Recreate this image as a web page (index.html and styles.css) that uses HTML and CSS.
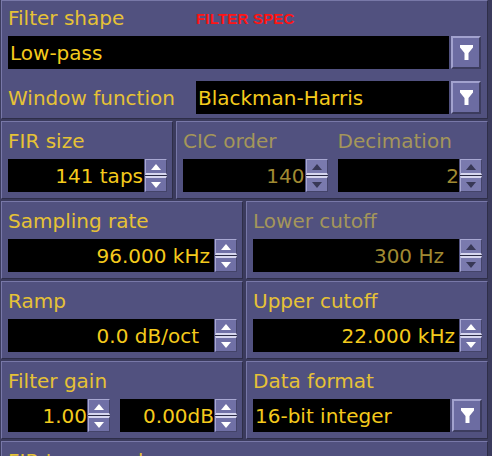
FILE: index.html
```html
<!DOCTYPE html>
<html>
<head>
<meta charset="utf-8">
<title>Filter spec</title>
<link rel="stylesheet" href="styles.css">
</head>
<body>
<div class="app">
  <section class="panel panel-top">
    <div class="title-row">
      <span class="label title-label">Filter shape</span>
      <span class="spec">FILTER SPEC</span>
    </div>
    <div class="combo">
      <div class="field field-left">Low-pass</div>
      <div class="combo-btn"><svg width="13" height="15" viewBox="0 0 13 15"><path d="M0 0H13V2.5L8.5 8V15H4.5V8L0 2.5Z" fill="#fff"/></svg></div>
    </div>
    <div class="win-row">
      <span class="label win-label">Window function</span>
      <div class="combo combo-inline">
        <div class="field field-left">Blackman-Harris</div>
        <div class="combo-btn"><svg width="13" height="15" viewBox="0 0 13 15"><path d="M0 0H13V2.5L8.5 8V15H4.5V8L0 2.5Z" fill="#fff"/></svg></div>
      </div>
    </div>
  </section>

  <div class="row row-b">
    <section class="panel cell">
      <div class="label">FIR size</div>
      <div class="spinfield">
        <div class="field field-right v-pad1">141 taps</div>
        <div class="spin"><div class="spin-up"></div><div class="spin-down"></div></div>
      </div>
    </section>
    <section class="panel cell cic">
      <div class="sub">
        <div class="label disabled">CIC order</div>
        <div class="spinfield">
          <div class="field field-right v-pad0 disabled-val">140</div>
          <div class="spin spin-off"><div class="spin-up"></div><div class="spin-down"></div></div>
        </div>
      </div>
      <div class="sub">
        <div class="label disabled">Decimation</div>
        <div class="spinfield">
          <div class="field field-right v-pad0 disabled-val">2</div>
          <div class="spin spin-off"><div class="spin-up"></div><div class="spin-down"></div></div>
        </div>
      </div>
    </section>
  </div>

  <div class="row row-half">
    <section class="panel cell">
      <div class="label">Sampling rate</div>
      <div class="spinfield">
        <div class="field field-right v-pad4">96.000 kHz</div>
        <div class="spin"><div class="spin-up"></div><div class="spin-down"></div></div>
      </div>
    </section>
    <section class="panel cell">
      <div class="label disabled">Lower cutoff</div>
      <div class="spinfield">
        <div class="field field-right v-pad15 disabled-val">300 Hz</div>
        <div class="spin spin-off"><div class="spin-up"></div><div class="spin-down"></div></div>
      </div>
    </section>
  </div>

  <div class="row row-half">
    <section class="panel cell">
      <div class="label">Ramp</div>
      <div class="spinfield">
        <div class="field field-right v-pad15">0.0 dB/oct</div>
        <div class="spin"><div class="spin-up"></div><div class="spin-down"></div></div>
      </div>
    </section>
    <section class="panel cell">
      <div class="label">Upper cutoff</div>
      <div class="spinfield">
        <div class="field field-right v-pad4">22.000 kHz</div>
        <div class="spin"><div class="spin-up"></div><div class="spin-down"></div></div>
      </div>
    </section>
  </div>

  <div class="row row-half">
    <section class="panel cell">
      <div class="label">Filter gain</div>
      <div class="gain-pair">
        <div class="spinfield">
          <div class="field field-right v-pad0">1.00</div>
          <div class="spin"><div class="spin-up"></div><div class="spin-down"></div></div>
        </div>
        <div class="spinfield">
          <div class="field field-right v-pad0">0.00dB</div>
          <div class="spin"><div class="spin-up"></div><div class="spin-down"></div></div>
        </div>
      </div>
    </section>
    <section class="panel cell">
      <div class="label">Data format</div>
      <div class="combo combo-cell">
        <div class="field field-left">16-bit integer</div>
        <div class="combo-btn"><svg width="13" height="15" viewBox="0 0 13 15"><path d="M0 0H13V2.5L8.5 8V15H4.5V8L0 2.5Z" fill="#fff"/></svg></div>
      </div>
    </section>
  </div>

  <div class="row row-full">
    <section class="panel cell">
      <div class="label">FIR taps used</div>
    </section>
  </div>
</div>
</body>
</html>
```

FILE: styles.css
```css
* {
  box-sizing: border-box;
}

html,
body {
  margin: 0;
  padding: 0;
}

body {
  width: 492px;
  height: 456px;
  overflow: hidden;
  background: #3b3b5d;
  font-family: "DejaVu Sans", "Noto Sans", sans-serif;
  font-size: 20px;
}

.app {
  display: flex;
  flex-direction: column;
  gap: 2px;
  width: 488px;
  padding-left: 1px;
}

.panel {
  background: #51517f;
  border: 1px solid;
  border-color: #7878a8 #2e2e48 #2e2e48 #7878a8;
}

.label {
  color: #e6c236;
  line-height: 24px;
  height: 24px;
  white-space: nowrap;
}

.label.disabled {
  color: #a4965a;
}

/* top panel */
.panel-top {
  height: 119px;
  padding: 5px 6px 4px 6px;
  display: flex;
  flex-direction: column;
}

.title-row {
  display: flex;
  align-items: center;
}

.title-label {
  width: 188px;
}

.spec {
  color: #ff1414;
  font-family: "Liberation Sans", Arial, sans-serif;
  font-weight: bold;
  font-size: 15px;
  line-height: 15px;
  letter-spacing: 0.2px;
}

.win-row {
  display: flex;
  align-items: center;
  margin-top: 12px;
}

.win-label {
  width: 188px;
}

/* combo box */
.combo {
  display: flex;
  gap: 2px;
  height: 33px;
  margin-top: 6px;
}

.combo-inline {
  flex: 1;
  margin-top: 0;
}

.combo-btn {
  width: 30px;
  display: flex;
  align-items: center;
  justify-content: center;
  background: #6c6ca2;
  border: 2px solid;
  border-color: #a2a2ce #3c3c5e #3c3c5e #a2a2ce;
}

.combo-btn svg {
  display: block;
}

/* text fields */
.field {
  flex: 1;
  min-width: 0;
  height: 33px;
  background: #000;
  color: #f4ca1c;
  line-height: 31px;
  padding-top: 2px;
  white-space: nowrap;
  overflow: hidden;
}

.field-left {
  padding-left: 2px;
}

.field-right {
  text-align: right;
}

.v-pad0 {
  padding-right: 0;
}

.v-pad1 {
  padding-right: 1px;
}

.v-pad4 {
  padding-right: 4px;
}

.v-pad15 {
  padding-right: 15px;
}

.disabled-val {
  color: #a08a32;
}

/* grid rows */
.row {
  display: grid;
  column-gap: 3px;
  height: 78px;
}

.row-b {
  grid-template-columns: 172px 312px;
}

.row-half {
  grid-template-columns: 242px 242px;
}

.row-full {
  grid-template-columns: 487px;
}

.cell {
  padding: 7px 5px 6px 6px;
}

.cic {
  display: grid;
  grid-template-columns: 1fr 1fr;
  column-gap: 10px;
}

.spinfield {
  display: flex;
  gap: 1px;
  height: 33px;
  margin-top: 6px;
}

.combo-cell {
  margin-top: 6px;
}

.gain-pair {
  display: grid;
  grid-template-columns: 102px 1fr;
  column-gap: 10px;
}

/* spinner */
.spin {
  width: 22px;
  display: flex;
  flex-direction: column;
  gap: 1px;
  background: #2c2c46;
}

.spin-up,
.spin-down {
  flex: 1;
  display: flex;
  align-items: center;
  justify-content: center;
  background: #7070a6;
  border-left: 1px solid #a8a8d2;
  border-right: 1px solid #44446a;
}

.spin-up {
  border-top: 1px solid #a8a8d2;
  border-bottom: 2px solid #d6d6ee;
}

.spin-down {
  border-top: 2px solid #d6d6ee;
  border-bottom: 1px solid #44446a;
}

.spin-up::before {
  content: "";
  width: 0;
  height: 0;
  border-left: 5px solid transparent;
  border-right: 5px solid transparent;
  border-bottom: 6px solid #fff;
}

.spin-down::before {
  content: "";
  width: 0;
  height: 0;
  border-left: 5px solid transparent;
  border-right: 5px solid transparent;
  border-top: 6px solid #fff;
}

.spin-off .spin-up,
.spin-off .spin-down {
  background: #7a7aae;
}

.spin-off .spin-up::before {
  border-bottom-color: #383856;
}

.spin-off .spin-down::before {
  border-top-color: #383856;
}
```
